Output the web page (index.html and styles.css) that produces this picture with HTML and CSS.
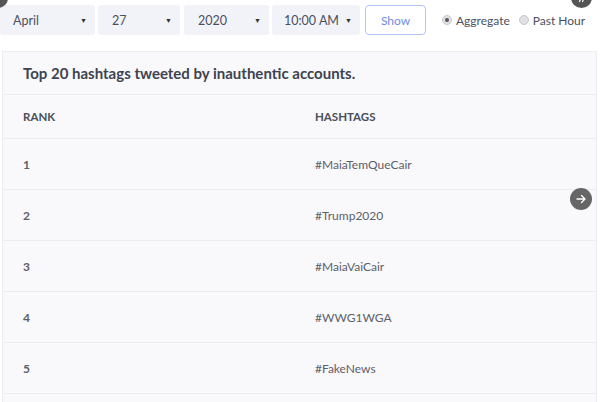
FILE: index.html
```html
<!DOCTYPE html>
<html>
<head>
<meta charset="utf-8">
<link rel="stylesheet" href="styles.css">
</head>
<body>
<div class="page">
  <div class="controls">
    <div class="select s-month"><span>April</span><span class="caret">▼</span></div>
    <div class="select s-day"><span>27</span><span class="caret">▼</span></div>
    <div class="select s-year"><span>2020</span><span class="caret">▼</span></div>
    <div class="select s-time"><span>10:00 AM</span><span class="caret">▼</span></div>
    <button class="show">Show</button>
    <label class="radio"><span class="dot checked"></span>Aggregate</label>
    <label class="radio"><span class="dot"></span>Past Hour</label>
  </div>
  <div class="card">
    <div class="title">Top 20 hashtags tweeted by inauthentic accounts.</div>
    <div class="row head"><div class="c1">RANK</div><div class="c2">HASHTAGS</div></div>
    <div class="row"><div class="c1">1</div><div class="c2">#MaiaTemQueCair</div></div>
    <div class="row"><div class="c1">2</div><div class="c2">#Trump2020</div></div>
    <div class="row"><div class="c1">3</div><div class="c2">#MaiaVaiCair</div></div>
    <div class="row"><div class="c1">4</div><div class="c2">#WWG1WGA</div></div>
    <div class="row"><div class="c1">5</div><div class="c2">#FakeNews</div></div>
    <div class="row"><div class="c1"></div><div class="c2"></div></div>
  </div>
  <div class="corner-l"></div>
  <div class="corner-r"><svg width="21" height="21" viewBox="0 0 21 21"><path d="M8.5 14.5l1.5-3M11.5 14.5l1.5-3" fill="none" stroke="#fff" stroke-width="1.2" stroke-linecap="round"/></svg></div>
  <div class="next"><svg width="12" height="12" viewBox="0 0 12 12"><path d="M2 6h8M6.5 2.5 10 6l-3.5 3.5" fill="none" stroke="#fff" stroke-width="1.4" stroke-linecap="round" stroke-linejoin="round"/></svg></div>
</div>
</body>
</html>
```
FILE: styles.css
```css
* { box-sizing: border-box; }
html, body { margin: 0; padding: 0; background: #fff; overflow: hidden; }
body { font-family: Lato, "Noto Sans", sans-serif; color: #3f4452; }
.page { position: relative; width: 600px; height: 402px; overflow: hidden; }
.controls { display: flex; align-items: center; height: 37px; padding-top: 3px; white-space: nowrap; }
.controls > * { flex-shrink: 0; }
.select { display: flex; align-items: center; justify-content: space-between; height: 30px; background: #f2f3f8; border-radius: 3px; font-size: 12.5px; color: #4a5060; padding: 0 8px 0 13px; }
.s-month { width: 95px; margin-right: 3px; }
.s-day { width: 82px; padding-left: 14px; margin-right: 4px; }
.s-year { width: 85px; padding-left: 14px; margin-right: 3px; }
.s-time { width: 88px; padding-left: 12px; margin-right: 5px; }
.caret { font-size: 7px; color: #333; }
.show { height: 30px; width: 61px; background: #fff; border: 1px solid #aec4f2; border-radius: 4px; color: #6e8de2; font-family: inherit; font-size: 12px; padding: 0; margin-right: 16px; }
.radio { display: flex; align-items: center; font-size: 12px; color: #4a5060; margin-right: 9px; }
.dot { width: 10px; height: 10px; border-radius: 50%; background: #e0e0e4; border: 1px solid #c8c8cc; margin-right: 4px; position: relative; }
.dot.checked::after { content: ""; position: absolute; left: 2px; top: 2px; width: 4px; height: 4px; border-radius: 50%; background: #555; }
.card { margin: 14px 3px 0 2px; background: #f9f9fc; border: 1px solid #ececf2; border-bottom: none; }
.title { height: 43px; display: flex; align-items: center; padding-left: 20px; font-size: 15px; font-weight: 700; color: #3d4350; border-bottom: 1px solid #ececf2; }
.row { display: grid; grid-template-columns: 293px 1fr; height: 51px; align-items: center; border-bottom: 1px solid #ececf2; font-size: 12px; color: #5c606a; }
.row.head { height: 44px; font-weight: 700; font-size: 11.5px; color: #4a4e58; }
.c1 { padding-left: 20px; font-weight: 700; }
.row .c2 { padding-left: 19px; }
.corner-l { position: absolute; left: -12px; top: -12px; width: 20px; height: 20px; border-radius: 50%; background: #555; }
.corner-r { position: absolute; left: 571px; top: -13px; width: 21px; height: 21px; border-radius: 50%; background: #555; }
.corner-r svg { display: block; }
.next { position: absolute; left: 570px; top: 188px; width: 22px; height: 22px; border-radius: 50%; background: #666; display: flex; align-items: center; justify-content: center; }
```
